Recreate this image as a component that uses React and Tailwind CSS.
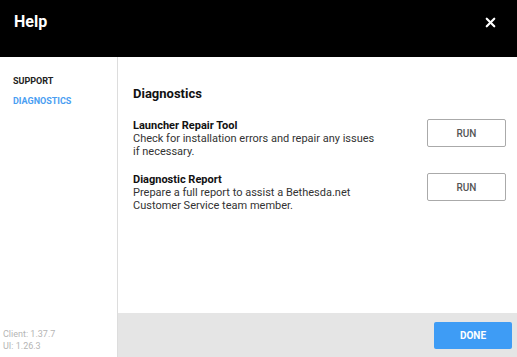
import { X } from "lucide-react";

const tools = [
  {
    title: "Launcher Repair Tool",
    desc: "Check for installation errors and repair any issues if necessary.",
  },
  {
    title: "Diagnostic Report",
    desc: "Prepare a full report to assist a Bethesda.net Customer Service team member.",
  },
];

export default function App() {
  return (
    <div className="w-[517px] h-[357px] flex flex-col bg-white overflow-hidden" style={{ fontFamily: "Roboto, 'Liberation Sans', sans-serif" }}>
      {/* Header */}
      <header className="h-[57px] shrink-0 bg-black flex items-start justify-between pl-[14px] pr-[19px] pt-[11px]">
        <h1 className="text-[16px] leading-[22px] font-bold text-white">Help</h1>
        <button className="text-white mt-[4px]">
          <X size={15} strokeWidth={3.5} />
        </button>
      </header>

      <div className="flex flex-1 min-h-0">
        {/* Sidebar */}
        <aside className="w-[118px] shrink-0 border-r border-[#dddddd] flex flex-col justify-between">
          <nav className="pl-[13px] pt-[18px] flex flex-col gap-[8px]">
            <span className="text-[9px] leading-[12px] font-bold text-[#222]">SUPPORT</span>
            <span className="text-[9px] leading-[12px] font-bold text-[#4a9ef2]">DIAGNOSTICS</span>
          </nav>
          <div className="pl-[3px] pb-[5px] text-[9px] leading-[12px] text-[#b5b5b5]">
            <p>Client: 1.37.7</p>
            <p>UI: 1.26.3</p>
          </div>
        </aside>

        {/* Main */}
        <main className="flex-1 flex flex-col">
          <div className="flex-1 pl-[15px] pr-[11px] pt-[28px]">
            <h2 className="text-[13px] leading-[18px] font-bold text-[#111]">Diagnostics</h2>
            <div className="mt-[16px] flex flex-col gap-[15px]">
              {tools.map((t) => (
                <div key={t.title} className="flex items-start justify-between">
                  <div className="w-[242px]">
                    <p className="text-[11px] leading-[13px] font-bold text-[#111]">{t.title}</p>
                    <p className="text-[11px] leading-[13px] text-[#333]">{t.desc}</p>
                  </div>
                  <button className="w-[79px] h-[28px] border border-[#aaaaaa] rounded-[2px] text-[10px] font-medium text-[#555]">
                    RUN
                  </button>
                </div>
              ))}
            </div>
          </div>

          {/* Footer */}
          <footer className="h-[44px] shrink-0 bg-[#e5e5e5] flex items-center justify-end pr-[5px]">
            <button className="w-[78px] h-[27px] rounded-[2px] bg-[#3e9cf5] text-white text-[10px] font-bold">
              DONE
            </button>
          </footer>
        </main>
      </div>
    </div>
  );
}
